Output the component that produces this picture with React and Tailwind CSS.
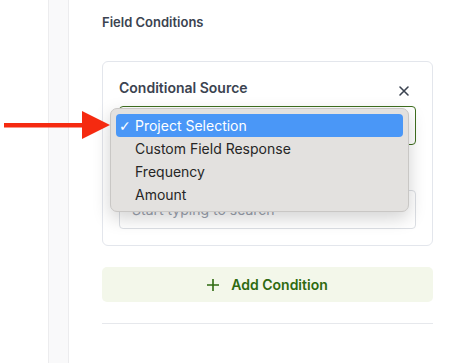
import React from "react";

const options = ["Project Selection", "Custom Field Response", "Frequency", "Amount"];

// Native-style select popup, drawn over the form
const SelectMenu = () => (
  <div className="absolute left-[110px] top-[108px] w-[299px] rounded-[7px] border border-[#c9c7c5] bg-[#e3e1df] p-[5px] shadow-[0_6px_18px_rgba(0,0,0,0.18)]">
    {options.map((opt, idx) => (
      <div
        key={opt}
        className={`flex h-[23px] items-center rounded-[4px] text-[14px] ${idx === 0 ? "bg-[#4a97f7] text-white" : "text-[#262626]"}`}
      >
        <span className="w-[19px] pl-[3px] font-['DejaVu_Sans',sans-serif] text-[14px] leading-none">{idx === 0 ? "✓" : ""}</span>
        <span>{opt}</span>
      </div>
    ))}
  </div>
);

const Arrow = () => (
  <svg className="absolute left-0 top-[108px]" width="112" height="34" viewBox="0 0 112 34">
    <rect x="4" y="15" width="80" height="4.5" fill="#f52a10" />
    <polygon points="82,3 110,17 82,31" fill="#f52a10" />
  </svg>
);

export default function App() {
  return (
    <div className="relative flex h-[363px] w-[454px] overflow-hidden bg-white font-['Inter',sans-serif]">
      <div className="w-[48px] shrink-0" />
      <div className="w-[21px] shrink-0 border-x border-[#ececee] bg-[#f9f9fa]" />

      <div className="flex w-[364px] flex-col pl-[33px]">
        <div className="pt-[13px] text-[13px] font-semibold leading-[18px] text-[#3b4350]">Field Conditions</div>

        <div className="mt-[30px] rounded-[6px] border border-[#e3e6ec] px-[16px] pb-[16px] pt-[16px]">
          <div className="flex items-start justify-between">
            <div className="text-[14px] font-semibold leading-[20px] text-[#3b4350]">Conditional Source</div>
            <svg className="mr-[6px] mt-[7px]" width="12" height="12" viewBox="0 0 12 12" stroke="#3b4350" strokeWidth="1.6" strokeLinecap="round">
              <path d="M2 2l8 8M10 2l-8 8" />
            </svg>
          </div>
          <div className="mt-[8px] flex h-[39px] items-center rounded-[4px] border border-[#3f6f1f] px-[12px] text-[14px] text-[#262626]">
            Project Selection
          </div>

          <div className="mt-[12px] text-[13px] font-semibold leading-[20px] text-[#3b4350]">Project</div>
          <div className="mt-[13px] flex h-[39px] items-center justify-between rounded-[4px] border border-[#dcdfe4] px-[12px] text-[14px] text-[#9ca3af]">
            <span>Start typing to search</span>
            <svg width="8" height="5" viewBox="0 0 8 5" fill="#4b5563">
              <path d="M0 0h8L4 5z" />
            </svg>
          </div>
        </div>

        <button className="mt-[21px] flex h-[35px] items-center justify-center gap-[12px] rounded-[5px] bg-[#f3f7ea] text-[14px] font-semibold text-[#2e6a10]">
          <svg width="12" height="12" viewBox="0 0 12 12" stroke="#2e6a10" strokeWidth="1.6">
            <path d="M6 0v12M0 6h12" />
          </svg>
          Add Condition
        </button>

        <div className="mt-[21px] h-px bg-[#e6e8ec]" />
      </div>

      <SelectMenu />
      <Arrow />
    </div>
  );
}
